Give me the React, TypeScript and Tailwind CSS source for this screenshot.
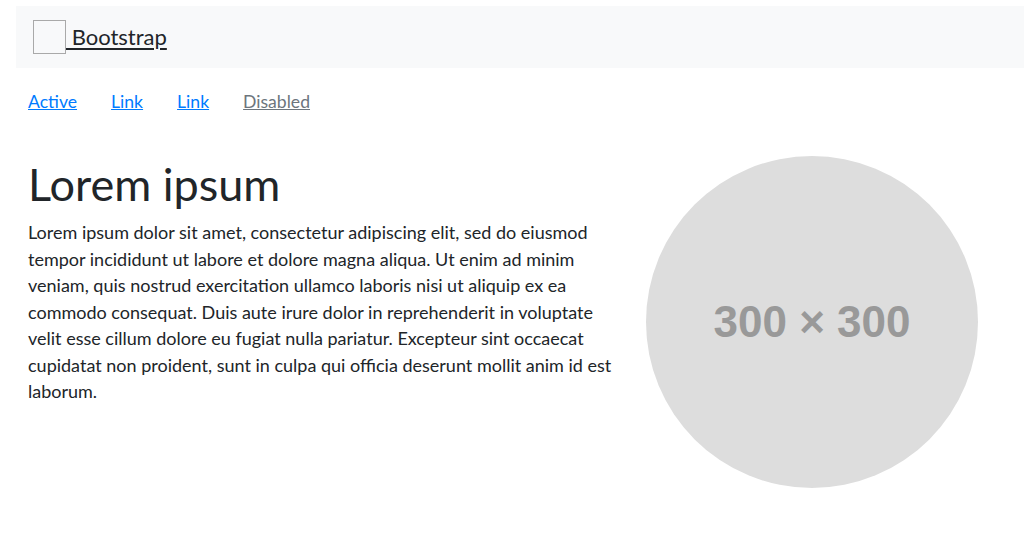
export default function App() {
  const links = [
    { label: "Active", disabled: false },
    { label: "Link", disabled: false },
    { label: "Link", disabled: false },
    { label: "Disabled", disabled: true },
  ];

  return (
    <div className="min-h-[544px] bg-white text-[#212529] font-['Lato','Noto_Sans',sans-serif]">
      {/* Navbar */}
      <div className="pt-[6px] pl-4">
        <nav className="flex h-[62px] items-center bg-[#f8f9fa] pl-[17px]">
          <a href="#" className="flex items-center text-[22px] leading-none text-[#212529] underline underline-offset-[3px]">
            <span className="inline-block h-[34px] w-[33px] border border-[#a9a9a9] bg-[#f8f9fa]" />
            <span className="whitespace-pre"> Bootstrap</span>
          </a>
        </nav>
      </div>

      {/* Nav links */}
      <ul className="mt-[21px] flex gap-[34px] pl-[28px] text-[17.6px] leading-[26px]">
        {links.map((l, i) => (
          <li key={i}>
            <a
              href="#"
              className={l.disabled ? "text-[#6c757d] underline" : "text-[#007bff] underline"}
            >
              {l.label}
            </a>
          </li>
        ))}
      </ul>

      {/* Content */}
      <div className="mt-[41px] flex pl-[28px]">
        <div className="w-[595px] pt-[2px]">
          <h1 className="text-[45px] leading-[53px] font-normal">Lorem ipsum</h1>
          <p className="mt-[8px] text-[18px] leading-[26.5px]">
            Lorem ipsum dolor sit amet, consectetur adipiscing elit, sed do eiusmod tempor incididunt ut labore et
            dolore magna aliqua. Ut enim ad minim veniam, quis nostrud exercitation ullamco laboris nisi ut aliquip ex
            ea commodo consequat. Duis aute irure dolor in reprehenderit in voluptate velit esse cillum dolore eu
            fugiat nulla pariatur. Excepteur sint occaecat cupidatat non proident, sunt in culpa qui officia deserunt
            mollit anim id est laborum.
          </p>
        </div>
        <div className="ml-[23px] flex h-[332px] w-[332px] shrink-0 items-center justify-center rounded-full bg-[#dddddd]">
          <span className="font-['Liberation_Sans',Arial,sans-serif] text-[44px] font-bold text-[#999999]">
            300 × 300
          </span>
        </div>
      </div>
    </div>
  );
}
